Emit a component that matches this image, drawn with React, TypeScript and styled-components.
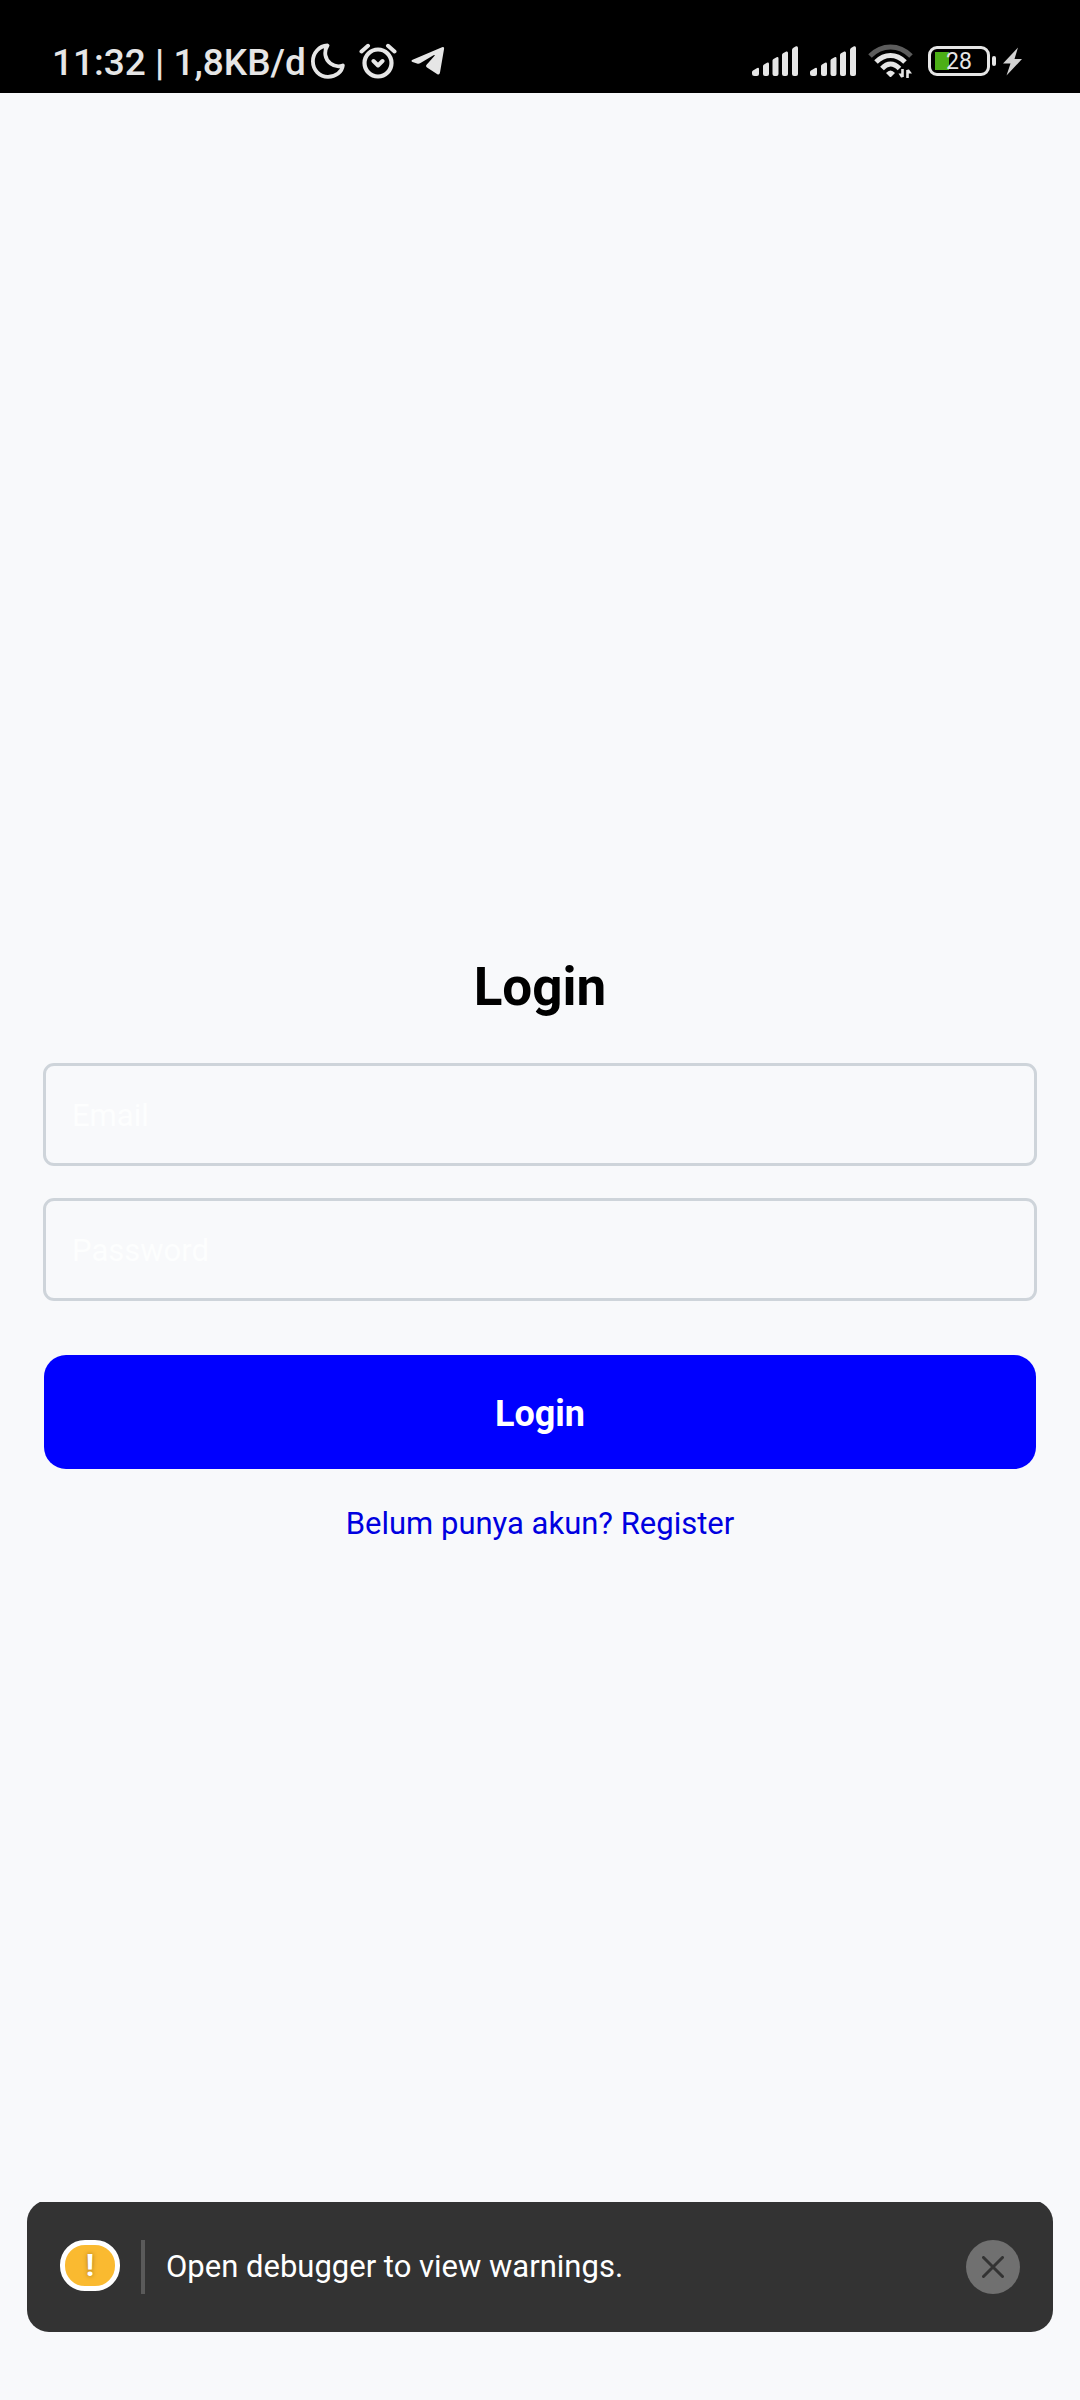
import React, { useState } from 'react';
import styled, { createGlobalStyle } from 'styled-components';

const GlobalStyle = createGlobalStyle`
  *, *::before, *::after { box-sizing: border-box; }
  body { margin: 0; background: #f8f9fb; }
  body, input, button { font-family: Roboto, "Noto Sans", sans-serif; }
`;

const Screen = styled.div`
  position: relative;
  display: flex;
  flex-direction: column;
  min-height: 100vh;
  background: #f8f9fb;
`;

const StatusBar = styled.header`
  display: flex;
  align-items: flex-end;
  justify-content: space-between;
  height: 93px;
  padding: 0 58px 12px 52px;
  background: #000;
  color: #e6e6e6;
`;

const StatusGroup = styled.div<{ $gap: number }>`
  display: flex;
  align-items: center;
  gap: ${(p) => p.$gap}px;
  height: 40px;
`;

const Clock = styled.span`
  padding-top: 3px;
  font-size: 37px;
  font-weight: 500;
  line-height: 40px;
  white-space: nowrap;
`;

const Icon = styled.svg`
  display: block;
  flex: none;
`;

const Power = styled.div`
  display: flex;
  align-items: center;
  gap: 7px;
  margin-left: 3px;
`;

const Battery = styled.div`
  display: flex;
  align-items: center;
  gap: 2px;
`;

const BatteryCase = styled.div`
  display: flex;
  align-items: center;
  justify-content: center;
  width: 62px;
  height: 30px;
  padding-top: 2px;
  border: 3px solid #e6e6e6;
  border-radius: 9px;
  font-size: 23px;
  line-height: 24px;
  background: linear-gradient(#4caf16, #4caf16) 4px 3px / 14px 18px no-repeat;
`;

const BatteryCap = styled.div`
  width: 4px;
  height: 10px;
  border-radius: 2px;
  background: #e6e6e6;
`;

const Main = styled.main`
  flex: 1;
  display: flex;
  flex-direction: column;
  justify-content: center;
  padding: 4px 43px 0;
`;

const Form = styled.form`
  display: flex;
  flex-direction: column;
`;

const Title = styled.h1`
  margin: 0 0 44px;
  font-size: 53px;
  font-weight: 700;
  line-height: 64px;
  text-align: center;
  color: #000;
`;

const Fields = styled.div`
  display: flex;
  flex-direction: column;
  gap: 32px;
  margin-bottom: 54px;
`;

const Field = styled.input`
  width: 100%;
  height: 103px;
  padding: 2px 26px 0;
  border: 3px solid #ced4da;
  border-radius: 11px;
  background: transparent;
  color: #000;
  font-size: 31px;
  outline: none;
  &::placeholder { color: #fdfefe; opacity: 1; }
`;

const Submit = styled.button`
  height: 114px;
  margin: 0 1px;
  padding: 4px 0 0;
  border: 0;
  border-radius: 22px;
  background: #00f;
  color: #fff;
  font-size: 36px;
  font-weight: 700;
  cursor: pointer;
`;

const RegisterLink = styled.a`
  align-self: center;
  margin-top: 36px;
  color: #0000e0;
  font-size: 31px;
  line-height: 38px;
  text-decoration: none;
`;

const ToastDock = styled.div`
  position: absolute;
  left: 27px;
  right: 27px;
  bottom: 68px;
  overflow: hidden;
`;

const Toast = styled.div`
  display: flex;
  align-items: center;
  height: 132px;
  margin-top: -2px;
  padding: 2px 33px 0;
  border-radius: 22px;
  background: #333;
`;

const Badge = styled.span`
  display: flex;
  align-items: center;
  justify-content: center;
  width: 60px;
  height: 51px;
  margin-bottom: 3px;
  border: 5px solid #fff;
  border-radius: 25px;
  background: #faba30;
  color: #fff;
  font-size: 31px;
  font-weight: 700;
  line-height: 40px;
  text-shadow: 0 0 4px rgba(80, 50, 0, 0.5);
`;

const Divider = styled.span`
  width: 4px;
  height: 54px;
  margin: 0 21px;
  background: #5a5a5a;
`;

const Message = styled.span`
  flex: 1;
  color: #fff;
  font-size: 31px;
  line-height: 36px;
`;

const Close = styled.button`
  display: flex;
  align-items: center;
  justify-content: center;
  width: 54px;
  height: 54px;
  padding: 0;
  border: 0;
  border-radius: 50%;
  background: #707070;
  cursor: pointer;
`;

const MoonIcon = () => (
  <Icon width="34" height="36" viewBox="0 0 34 36" fill="none" stroke="#e6e6e6" strokeWidth="3.8" strokeLinejoin="round">
    <path d="M16.500 2.500C8 3 1.900 10 1.900 18.300C1.900 27 8.500 33.800 17 33.800C25 33.800 31 29 31.800 22.500C28 24 23.500 23.500 19.500 20.500C14 16.500 12.500 9 16.500 2.500Z" />
  </Icon>
);

const AlarmIcon = () => (
  <Icon width="38" height="36" viewBox="0 0 38 36" fill="none" stroke="#e6e6e6" strokeWidth="4" strokeLinecap="round" strokeLinejoin="round">
    <circle cx="19" cy="20" r="13.500" strokeWidth="4.200" />
    <path d="M2.500 8.500L9 2.800M29 2.800L35.500 8.500M14.500 18L19 22.500L23.500 18" />
  </Icon>
);

const TelegramIcon = () => (
  <Icon width="34" height="30" viewBox="0 0 34 30" fill="#e6e6e6">
    <path d="M31 1.200Q33.500 .4 33 3.200L29 26.500Q28.400 29.600 26 28L16 21.600Q14.200 20.300 15.800 18.400L23.600 9.800Q24.200 8.400 22.500 9.200L9.500 17Q7.800 18 6 17.400L1.500 16Q-.6 15 1.600 13.800Z" />
  </Icon>
);

const SignalIcon = () => (
  <Icon width="46" height="30" viewBox="0 0 46 30" fill="#e6e6e6">
    <path d="M0 27.500V26Q0 25 1 24.500L5.200 22Q7 21.300 7 23V28Q7 30 5 30H2.500Q0 30 0 27.500Z" />
    <path d="M11 28V20Q11 19 12 18.500L15 16.700Q17 16 17 18V28Q17 30 15 30H13Q11 30 11 28Z" />
    <path d="M20.500 28V14.500Q20.500 13.500 21.500 13L24.600 11.200Q26.500 10.500 26.500 12.500V28Q26.500 30 24.500 30H22.500Q20.500 30 20.500 28Z" />
    <path d="M30 28V9Q30 8 31 7.300L34.200 5.600Q36 5 36 7V28Q36 30 34 30H32Q30 30 30 28Z" />
    <path d="M40 28V4Q40 2.800 41 2L44 .3Q46 -.3 46 2V28Q46 30 44 30H42Q40 30 40 28Z" />
  </Icon>
);

const WifiIcon = () => (
  <Icon width="45" height="34" viewBox="0 0 45 34" fill="none" stroke="#e6e6e6" strokeWidth="5">
    <path d="M2 12Q11 3 22.500 3T43 12" stroke="#5c5c5c" />
    <path d="M8 18Q14.500 11.500 22.500 11.500T37 18" />
    <path d="M14 24.500Q18 20 22.500 20T31.500 24.500" />
    <path d="M18 29Q22.500 24 27 29L23.500 32.500Q22.500 33.500 21.500 32.500Z" fill="#e6e6e6" stroke="none" />
    <path d="M34.500 25V33M39.500 34V26" strokeWidth="2.600" />
    <path d="M34.500 33.600H33L30.500 29.500H34.500ZM39.500 25.500H41L44 29.500H39.500Z" fill="#e6e6e6" stroke="none" />
  </Icon>
);

const BoltIcon = () => (
  <Icon width="19" height="29" viewBox="0 0 19 29" fill="#d2d2d2">
    <path d="M15 0.500L0 16.500H7.500L3.500 28.500L19 12H11.500Z" />
  </Icon>
);

const CrossIcon = () => (
  <Icon width="22" height="22" viewBox="0 0 22 22" stroke="#333" strokeWidth="3" strokeLinecap="round">
    <path d="M1.500 1.500L20.500 20.500M20.500 1.500L1.500 20.500" />
  </Icon>
);

export default function App() {
  const [warningOpen, setWarningOpen] = useState(true);

  return (
    <>
      <GlobalStyle />
      <Screen>
        <StatusBar>
          <StatusGroup $gap={14}>
            <StatusGroup $gap={5}>
              <Clock>11:32 | 1,8KB/d</Clock>
              <MoonIcon />
            </StatusGroup>
            <AlarmIcon />
            <TelegramIcon />
          </StatusGroup>
          <StatusGroup $gap={12}>
            <SignalIcon />
            <SignalIcon />
            <WifiIcon />
            <Power>
              <Battery>
                <BatteryCase>28</BatteryCase>
                <BatteryCap />
              </Battery>
              <BoltIcon />
            </Power>
          </StatusGroup>
        </StatusBar>
        <Main>
          <Form onSubmit={(e) => e.preventDefault()}>
            <Title>Login</Title>
            <Fields>
              <Field type="email" placeholder="Email" aria-label="Email" />
              <Field type="password" placeholder="Password" aria-label="Password" />
            </Fields>
            <Submit type="submit">Login</Submit>
            <RegisterLink href="#register">Belum punya akun? Register</RegisterLink>
          </Form>
        </Main>
        {warningOpen && (
          <ToastDock>
            <Toast role="status">
              <Badge>!</Badge>
              <Divider />
              <Message>Open debugger to view warnings.</Message>
              <Close type="button" aria-label="Dismiss" onClick={() => setWarningOpen(false)}>
                <CrossIcon />
              </Close>
            </Toast>
          </ToastDock>
        )}
      </Screen>
    </>
  );
}
